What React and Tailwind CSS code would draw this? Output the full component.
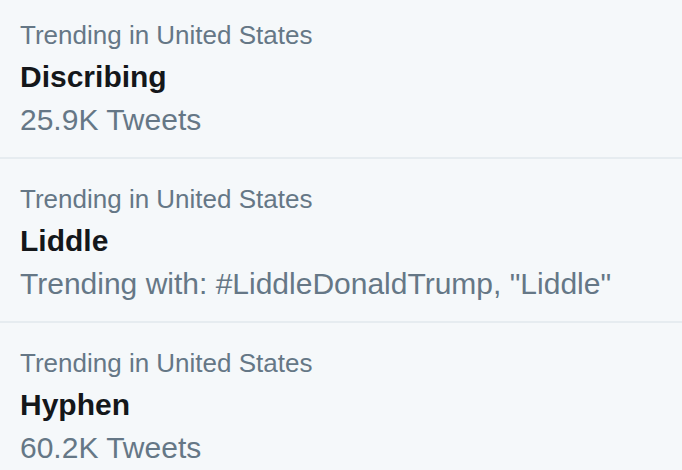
const trends = [
  { context: "Trending in United States", name: "Discribing", meta: "25.9K Tweets" },
  { context: "Trending in United States", name: "Liddle", meta: 'Trending with: #LiddleDonaldTrump, "Liddle"' },
  { context: "Trending in United States", name: "Hyphen", meta: "60.2K Tweets" },
];

export default function App() {
  return (
    <div className="h-[470px] w-[682px] overflow-hidden bg-[#f5f8fa] font-['Liberation_Sans',Arial,sans-serif]">
      {trends.map((t, i) => (
        <div
          key={i}
          className={
            "border-b-2 border-[#e6ecf0] pl-[20px] pb-[17px] " + (i === 0 ? "pt-[17px]" : "pt-[22px]")
          }
        >
          <div className="text-[26px] leading-[36px] text-[#657786]">{t.context}</div>
          <div className="mt-[4px] text-[30px] font-bold leading-[40px] text-[#14171a]">{t.name}</div>
          <div className="mt-[3px] text-[30px] leading-[40px] text-[#657786]">{t.meta}</div>
        </div>
      ))}
    </div>
  );
}
